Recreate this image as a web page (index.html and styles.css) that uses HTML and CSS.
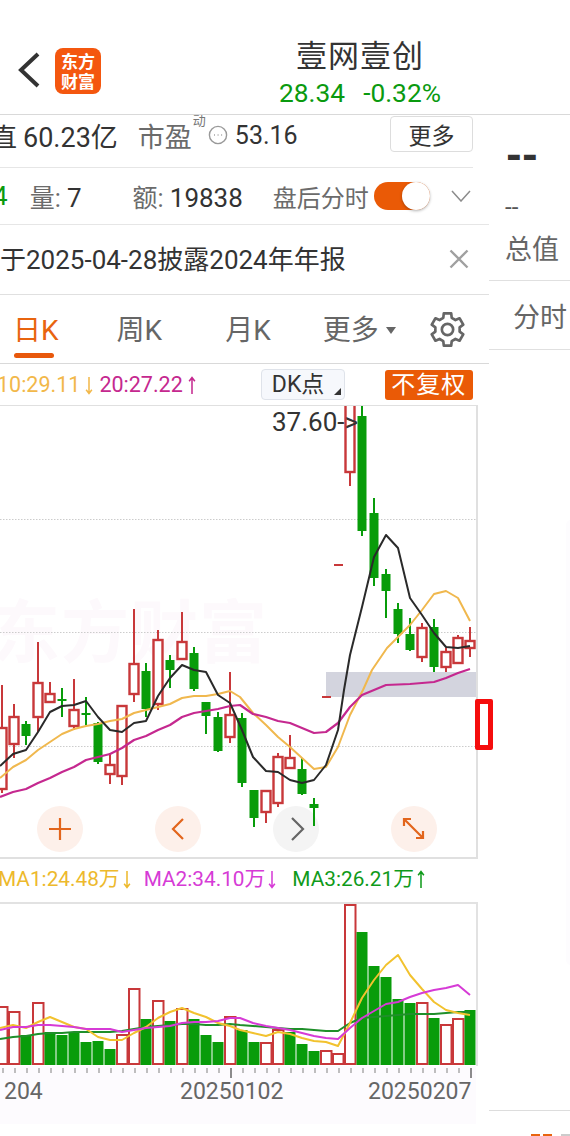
FILE: index.html
```html
<!DOCTYPE html>
<html lang="zh-CN">
<head>
  <meta charset="UTF-8" />
  <meta name="viewport" content="width=device-width, initial-scale=1.0"/>
  <title>壹网壹创</title>
  <link rel="stylesheet" href="styles.css">
</head>
<body>
  <div class="header">
    <svg class="back" viewBox="0 0 24 38"><path d="M21 3 L4 19 L21 35"/></svg>
    <div class="logo"><span>东方</span><span>财富</span></div>
    <div class="title-block">
      <div class="title">壹网壹创</div>
      <div class="price"><span>28.34</span><span>-0.32%</span></div>
    </div>
  </div>

  <div class="page">
    <div class="left">
      <!-- quote rows -->
      <div class="row row-stats">
        <span class="dark cut-left">直</span>
        <span class="dark stat-value">60.23亿</span>
        <span class="grey stat-pe">市盈<sup class="sup">动</sup></span>
        <svg class="dots" viewBox="0 0 20 20"><circle cx="10" cy="10" r="8.6"/><path d="M6 10h.9M9.6 10h.9M13.2 10h.9"/></svg>
        <span class="dark stat-num">53.16</span>
        <button class="more-btn">更多</button>
      </div>
      <div class="row row-volume">
        <span class="green vol-cut">4</span>
        <span class="vol-item vol-liang"><span class="grey">量:</span> <span class="dark vol-num">7</span></span>
        <span class="vol-item vol-e"><span class="grey">额:</span> <span class="dark vol-num">19838</span></span>
        <span class="grey vol-after">盘后分时</span>
        <span class="toggle"><span class="knob"></span></span>
        <svg class="chev" viewBox="0 0 20 12"><path d="M1 1 L10 11 L19 1"/></svg>
      </div>
      <div class="row row-notice">
        <span class="notice-text">于2025-04-28披露2024年年报</span>
        <svg class="close" viewBox="0 0 20 20"><path d="M1.5 1.5 L18.5 18.5 M18.5 1.5 L1.5 18.5"/></svg>
      </div>

      <!-- period tabs -->
      <div class="tabs">
        <div class="tab tab-active">日K</div>
        <div class="tab tab-week">周K</div>
        <div class="tab tab-month">月K</div>
        <div class="tab tab-more">更多<i class="caret"></i></div>
        <svg class="gear" viewBox="0 0 34 34">
          <path d="M12.9 5.7L13.4 1.400H20.600L21.100 5.700L24.700 7.800L28.700 6.100L32.300 12.300L28.800 14.900V19.100L32.300 21.700L28.700 27.900L24.700 26.200L21.100 28.300L20.600 32.600H13.400L12.900 28.300L9.300 26.200L5.300 27.900L1.700 21.700L5.200 19.100V14.900L1.700 12.300L5.300 6.100L9.300 7.800Z"/>
          <circle cx="17" cy="17" r="5.500"/>
        </svg>
      </div>

      <!-- MA legend + chart options -->
      <div class="ma-bar">
        <span class="ma-2">10:29.11<svg class="arrow" viewBox="0 0 8 20"><path d="M4 1V18M1 14.500L4 18.500L7 14.500"/></svg></span>
        <span class="ma-3">20:27.22<svg class="arrow" viewBox="0 0 8 20"><path d="M4 19V2M1 5.500L4 1.500L7 5.500"/></svg></span>
        <span class="dk-btn">DK点<i class="dk-corner"></i></span>
        <span class="fq-btn">不复权</span>
      </div>

      <!-- K line chart -->
      <div class="kline">
        <div class="watermark">东方财富</div>
        <svg id="kline-svg" class="chart-svg" viewBox="0 406 476 451"></svg>
        <div class="high-label">37.60-&gt;</div>
      </div>

      <div class="vol-legend">
        <span class="v1">MA1:24.48万<svg class="arrow" viewBox="0 0 8 20"><path d="M4 1V18M1 14.500L4 18.500L7 14.500"/></svg></span>
        <span class="v2">MA2:34.10万<svg class="arrow" viewBox="0 0 8 20"><path d="M4 1V18M1 14.500L4 18.500L7 14.500"/></svg></span>
        <span class="v3">MA3:26.21万<svg class="arrow" viewBox="0 0 8 20"><path d="M4 19V2M1 5.500L4 1.500L7 5.500"/></svg></span>
      </div>

      <!-- volume chart -->
      <div class="volume">
        <svg id="volume-svg" class="chart-svg" viewBox="0 904 476 162"></svg>
      </div>
      <div class="axis">
        <svg id="axis-svg" class="axis-ticks" viewBox="0 1066 476 12"></svg>
        <div class="axis-dates">
          <span class="date-cut">204</span>
          <span class="date-mid">20250102</span>
          <span class="date-end">20250207</span>
        </div>
      </div>
    </div>

    <!-- neighbouring stock page, peeking in from the right -->
    <div class="right">
      <div class="right-top">
        <div class="big-dash">--</div>
        <div class="small-dash">--</div>
        <div class="right-label">总值</div>
      </div>
      <div class="right-tab">分时</div>
      <div class="right-foot"><i></i><i></i><b></b></div>
    </div>

    <div class="scroll-marker"></div>
    <div class="edge-glow"></div>
  </div>

  <script src="chart.js"></script>
</body>
</html>
```

FILE: styles.css
```css
* {
  box-sizing: border-box;
}

body {
  font-family: Roboto, "Noto Sans CJK SC", sans-serif;
  background: #fff;
  color: #333;
  margin: 0;
  width: 570px;
  height: 1136px;
  overflow: hidden;
}

.dark { color: #333; }
.grey { color: #6b6b6b; }
.green { color: #0a9a0f; }

/* Header */
.header {
  height: 115px;
  padding: 36px 0 0 17px;
  display: flex;
  align-items: flex-start;
  border-bottom: 1px solid #d9d9d9;
}
.back {
  width: 24px;
  height: 38px;
  margin-top: 15px;
  fill: none;
  stroke: #333;
  stroke-width: 4;
}
.logo {
  width: 46px;
  height: 46px;
  margin: 12px 0 0 14px;
  background: #f4570f;
  border-radius: 8px;
  color: #fff;
  font-family: "Noto Sans CJK SC", sans-serif;
  font-weight: 700;
  font-size: 17px;
  line-height: 20px;
  display: flex;
  flex-direction: column;
  align-items: center;
  justify-content: center;
}
.title-block {
  width: 200px;
  margin-left: 159px;
  text-align: center;
}
.title {
  font-size: 31px;
  line-height: 36px;
  color: #333;
  font-family: "Noto Sans CJK SC", sans-serif;
  letter-spacing: 1px;
}
.price {
  margin-top: 5px;
  font-size: 26.300px;
  line-height: 32px;
  color: #0a9a0f;
  display: flex;
  justify-content: center;
  gap: 18px;
}

/* Page split */
.page {
  position: relative;
  display: flex;
  height: 1021px;
}
.left {
  width: 489px;
  flex: none;
  overflow: hidden;
}
.right {
  flex: 1;
  overflow: hidden;
  display: flex;
  flex-direction: column;
}

/* Quote rows */
.row {
  display: flex;
  align-items: center;
  white-space: nowrap;
}
.row-stats {
  height: 53px;
  width: 473px;
  font-size: 25px;
  padding-bottom: 12px;
  border-bottom: 1px solid #e6e6e6;
}
.cut-left {
  margin-left: -9px;
  font-size: 26px;
}
.stat-value {
  margin-left: 6px;
  font-size: 27px;
}
.stat-pe {
  margin-left: 20px;
  font-size: 27px;
  position: relative;
}
.sup {
  position: absolute;
  top: -4px;
  left: 55px;
  font-size: 13px;
  line-height: 18px;
  color: #777;
}
.dots {
  width: 20px;
  height: 20px;
  margin-left: 16px;
  fill: none;
  stroke: #999;
  stroke-width: 1.400;
}
.stat-num {
  margin-left: 7px;
}
.more-btn {
  margin-left: auto;
  align-self: flex-start;
  margin-top: 1px;
  width: 83px;
  height: 36px;
  background: #fff;
  border: 1px solid #ddd;
  border-radius: 4px;
  font: 23px "Noto Sans CJK SC", sans-serif;
  color: #333;
  padding: 0;
}

.row-volume {
  height: 57px;
  font-size: 25px;
  border-bottom: 1px solid #e6e6e6;
}
.vol-cut {
  margin-left: -7px;
  flex: none;
  font-size: 26px;
}
.vol-num {
  font-size: 26px;
}
.vol-liang {
  margin-left: 22px;
}
.vol-e {
  margin-left: 51px;
}
.vol-after {
  margin-left: 30px;
  font-size: 24px;
}
.toggle {
  width: 56px;
  height: 28px;
  margin-left: 5px;
  background: #ea5a06;
  border-radius: 14px;
  position: relative;
}
.knob {
  position: absolute;
  right: 0;
  top: 0;
  width: 28px;
  height: 28px;
  border-radius: 50%;
  background: #fff;
  box-shadow: 0 1px 3px rgba(0, 0, 0, .3);
}
.chev {
  width: 20px;
  height: 12px;
  margin-left: 21px;
  fill: none;
  stroke: #8c8c8c;
  stroke-width: 1.500;
}

.row-notice {
  height: 70px;
  padding-bottom: 5px;
  border-bottom: 1px solid #e0e0e0;
}
.notice-text {
  color: #333;
  font-size: 26px;
}
.close {
  width: 20px;
  height: 20px;
  margin: 4px 20px 0 auto;
  fill: none;
  stroke: #a0a0a0;
  stroke-width: 2.400;
}

/* Tabs */
.tabs {
  height: 69px;
  display: flex;
  align-items: center;
  border-bottom: 1px solid #d9d9d9;
  position: relative;
  font-size: 28px;
  color: #666;
}
.tab {
  white-space: nowrap;
  line-height: 36px;
  margin-top: 3px;
}
.tab-active {
  margin-left: 13px;
  color: #e8640f;
  position: relative;
}
.tab-active::after {
  content: "";
  position: absolute;
  left: 1px;
  right: 5px;
  bottom: -9px;
  height: 5px;
  border-radius: 3px;
  background: #e8580c;
}
.tab-week {
  margin-left: 58px;
}
.tab-month {
  margin-left: 63px;
}
.tab-more {
  margin-left: 52px;
}
.caret {
  display: inline-block;
  margin-left: 7px;
  vertical-align: 6px;
  border-left: 5px solid transparent;
  border-right: 5px solid transparent;
  border-top: 7px solid #666;
}
.gear {
  width: 35px;
  height: 35px;
  margin-left: 34px;
  fill: none;
  stroke: #666;
  stroke-width: 2.600;
  stroke-linejoin: round;
}

/* MA legend */
.ma-bar {
  height: 41px;
  display: flex;
  align-items: center;
  font-size: 21.500px;
  white-space: nowrap;
}
.ma-2 {
  color: #f2b84a;
  margin-left: -3px;
}
.ma-3 {
  color: #c5288f;
  margin-left: 6px;
}
.arrow {
  width: 8px;
  height: 19px;
  margin-left: 5px;
  vertical-align: -3px;
  fill: none;
  stroke: currentColor;
  stroke-width: 1.600;
}
.dk-btn {
  margin-left: 65px;
  width: 84px;
  height: 31px;
  background: #f6f8fc;
  border: 1px solid #dfe3ea;
  border-radius: 4px;
  color: #333;
  font-size: 23px;
  line-height: 29px;
  padding-left: 10px;
  position: relative;
}
.dk-corner {
  position: absolute;
  right: 3px;
  bottom: 4px;
  border-left: 7px solid transparent;
  border-bottom: 7px solid #333;
}
.fq-btn {
  margin-left: 40px;
  width: 88px;
  height: 30px;
  background: #ea5a06;
  border-radius: 3px;
  color: #fff;
  font-size: 24px;
  line-height: 30px;
  text-align: center;
  letter-spacing: 1px;
}

/* Charts */
.kline {
  width: 478px;
  height: 454px;
  position: relative;
  border-top: 1px solid #e0e0e0;
  border-right: 2px solid #e0e0e0;
  border-bottom: 2px solid #e0e0e0;
  overflow: hidden;
}
.chart-svg {
  display: block;
  width: 476px;
  height: 100%;
  position: relative;
}
.watermark {
  position: absolute;
  left: -8px;
  top: 188px;
  font-size: 68px;
  line-height: 80px;
  font-weight: 700;
  letter-spacing: 1px;
  color: #fdf9fc;
  white-space: nowrap;
}
.high-label {
  position: absolute;
  left: 272px;
  top: 1px;
  font-size: 26px;
  line-height: 30px;
  color: #333;
}

.vol-legend {
  height: 43px;
  padding-bottom: 8px;
  display: flex;
  align-items: center;
  font-size: 20.800px;
  white-space: nowrap;
}
.v1 {
  color: #edb92c;
  margin-left: -2px;
}
.v2 {
  color: #d63bd6;
  margin-left: 13px;
}
.v3 {
  color: #0f9a1a;
  margin-left: 16px;
}
.vol-legend .arrow {
  margin-left: 3px;
}

.volume {
  width: 478px;
  height: 164px;
  border-top: 2px solid #e2e2e2;
  border-right: 2px solid #e2e2e2;
  overflow: hidden;
}
.axis {
  width: 476px;
  height: 58px;
  background: #fdfbfe;
}
.axis-ticks {
  display: block;
  width: 476px;
  height: 12px;
}
.axis-dates {
  position: relative;
  height: 46px;
  font-size: 23px;
  color: #666;
  line-height: 28px;
}
.date-cut, .date-mid, .date-end {
  position: absolute;
  top: 0;
}
.date-cut { left: 4px; }
.date-mid { left: 180px; }
.date-end { left: 368px; }

/* Right panel */
.right-top {
  height: 166px;
  padding: 20px 0 0 16px;
  border-bottom: 1px solid #e0e0e0;
}
.big-dash {
  font-size: 40px;
  line-height: 44px;
  font-weight: 900;
  letter-spacing: -2px;
  color: #333;
}
.small-dash {
  font-size: 24px;
  line-height: 28px;
  margin-top: 14px;
  color: #555;
}
.right-label {
  font-size: 27px;
  line-height: 36px;
  margin-top: 11px;
  color: #666;
}
.right-tab {
  height: 69px;
  padding: 19px 0 0 24px;
  font-size: 27px;
  line-height: 36px;
  color: #666;
  white-space: nowrap;
  border-bottom: 1px solid #e0e0e0;
}
.right-foot {
  margin-top: auto;
  height: 26px;
  border-top: 1px solid #ddd;
  padding: 23px 0 0 42px;
  display: flex;
  gap: 3px;
}
.right-foot i {
  width: 10px;
  height: 3px;
  background: #e8640f;
}
.right-foot b {
  width: 10px;
  height: 3px;
  margin-left: 6px;
  background: #ccc;
}

.scroll-marker {
  position: absolute;
  left: 475px;
  top: 584px;
  width: 18px;
  height: 51px;
  border: 5px solid #f50d0d;
  border-radius: 2px;
  background: #fff;
}
.edge-glow {
  position: absolute;
  left: 566px;
  top: 405px;
  width: 10px;
  height: 445px;
  border-radius: 6px;
  background: #fdfcfe;
}
```

FILE: chart.js
```js
// x, high, body top, body bottom, low, colour (page pixels)
const CANDLES = [
  [2, 685, 728, 789, 793, "r"], [14, 704, 717, 744, 758, "r"], [26, 721, 724, 736, 745, "g"],
  [38, 642, 683, 717, 732, "r"], [50, 682, 694, 702, 702, "r"], [62, 688, 699, 701, 717, "g"],
  [74, 679, 710, 726, 730, "r"], [86, 697, 713, 715, 725, "g"], [98, 722, 723, 762, 764, "g"],
  [110, 753, 765, 774, 784, "r"], [122, 706, 706, 776, 785, "r"], [134, 609, 664, 694, 702, "r"],
  [146, 663, 671, 709, 717, "g"], [158, 630, 640, 704, 710, "r"], [170, 655, 660, 670, 688, "g"],
  [182, 612, 642, 659, 659, "r"], [194, 647, 653, 689, 691, "g"], [206, 702, 702, 716, 734, "g"],
  [218, 712, 717, 751, 752, "g"], [230, 672, 715, 737, 743, "r"], [242, 713, 718, 783, 787, "g"],
  [254, 790, 790, 818, 827, "g"], [266, 791, 791, 812, 823, "r"], [278, 753, 757, 803, 807, "r"],
  [290, 735, 758, 768, 768, "r"], [302, 758, 769, 794, 795, "g"], [314, 798, 804, 808, 826, "g"],
  [350, 400, 400, 472, 486, "r"], [362, 406, 416, 531, 536, "g"], [374, 498, 513, 578, 586, "g"],
  [386, 569, 574, 591, 618, "g"], [398, 603, 609, 634, 643, "g"], [410, 618, 634, 650, 651, "g"],
  [422, 623, 628, 657, 662, "r"], [434, 619, 627, 667, 672, "g"], [446, 648, 652, 667, 672, "r"],
  [458, 635, 638, 663, 664, "r"], [470, 627, 641, 648, 657, "r"]
];

const K_MA1 = "0,766 13,754 26,750 38,732 50,712 62,706 74,705 86,701 98,717 110,730 122,732 134,723 146,721 158,696 170,678 182,665 194,670 206,672 218,695 230,703 242,730 253,757 266,771 278,772 290,780 302,783 314,780 326,765 338,730 344,690 350,655 362,607 374,557 386,535 398,548 410,598 422,615 434,633 446,647 458,648 470,646";
const K_MA2 = "0,778 13,767 26,760 38,750 50,742 62,734 74,729 86,726 98,724 110,721 122,719 134,713 146,710 158,707 170,704 182,698 194,696 206,696 218,694 230,691 240,697 253,713 266,725 278,737 290,747 302,758 314,769 326,767 338,747 350,715 363,690 372,670 387,648 398,637 410,625 422,610 434,594 446,591 458,598 470,621";
const K_MA3 = "0,797 13,792 26,789 38,783 50,778 62,772 74,767 86,760 98,757 110,754 122,748 134,740 146,736 158,730 170,725 182,717 194,713 206,711 218,709 230,706 240,705 253,714 266,717 278,721 290,723 302,728 314,733 326,732 338,723 350,707 362,695 386,685 410,684 434,682 446,678 458,673 470,669";

// x, bar top, colour
const BARS = [
  [2, 1007, "r"], [14, 1012, "r"], [26, 1035, "g"], [38, 1003, "r"], [50, 1032, "g"], [62, 1035, "g"],
  [74, 1033, "g"], [86, 1042, "g"], [98, 1041, "g"], [110, 1049, "g"], [122, 1035, "r"], [134, 989, "r"],
  [146, 1019, "g"], [158, 1001, "r"], [170, 1021, "g"], [182, 1009, "r"], [194, 1019, "g"], [206, 1035, "g"],
  [218, 1042, "g"], [230, 1017, "r"], [242, 1030, "g"], [254, 1042, "g"], [266, 1043, "r"], [278, 1030, "r"],
  [290, 1032, "g"], [302, 1044, "g"], [314, 1051, "g"], [326, 1051, "r"], [338, 1054, "r"], [350, 905, "r"],
  [362, 932, "g"], [374, 966, "g"], [386, 977, "g"], [398, 999, "g"], [410, 1003, "g"], [422, 1003, "r"],
  [434, 1018, "g"], [446, 1025, "r"], [458, 1019, "r"], [470, 1010, "g"]
];

const V_MA1 = "0,1028 13,1025 26,1028 38,1022 50,1017 62,1022 74,1027 86,1029 98,1037 110,1040 122,1040 134,1033 146,1027 158,1018 170,1012 182,1008 194,1013 206,1017 218,1023 230,1026 240,1030 253,1033 266,1036 278,1032 290,1034 302,1038 314,1041 326,1042 338,1046 350,1023 362,998 374,980 386,965 398,955 410,975 422,989 434,1002 446,1010 458,1013 470,1015";
const V_MA2 = "0,1030 13,1027 26,1027 38,1025 50,1025 62,1026 74,1027 86,1029 98,1029 110,1029 122,1032 134,1030 146,1028 158,1027 170,1026 182,1023 194,1022 206,1022 218,1021 230,1018 240,1018 253,1023 266,1026 278,1028 290,1030 302,1033 314,1036 326,1038 338,1039 350,1028 362,1018 374,1011 386,1004 398,1002 410,997 422,993 434,990 446,988 458,985 470,995";
const V_MA3 = "0,1039 13,1037 26,1036 38,1034 50,1033 62,1033 74,1032 86,1032 98,1032 110,1032 122,1031 134,1029 146,1027 158,1026 170,1025 182,1024 194,1024 206,1025 218,1025 230,1024 240,1025 253,1026 266,1027 278,1028 290,1029 302,1029 314,1030 326,1031 338,1031 350,1023 362,1018 374,1017 386,1016 398,1015 410,1014 422,1014 434,1014 446,1013 458,1012 470,1012";

const RED = "#c8383a";
const GREEN = "#089c0a";

function polyline(points, colour, width) {
  return `<polyline points="${points}" fill="none" stroke="${colour}" stroke-width="${width}" stroke-linejoin="round"/>`;
}

function drawCandle([x, high, top, bottom, low, c]) {
  const colour = c === "r" ? RED : GREEN;
  let out = `<line x1="${x}" x2="${x}" y1="${high}" y2="${low}" stroke="${colour}" stroke-width="2"/>`;
  if (c === "r") {
    out += `<rect x="${x - 4.5}" y="${top}" width="9" height="${bottom - top}" fill="#fff" stroke="${colour}" stroke-width="2.400"/>`;
  } else {
    out += `<rect x="${x - 4.5}" y="${top}" width="9" height="${bottom - top}" fill="${colour}"/>`;
  }
  return out;
}

function drawKline() {
  let out = "";
  [519.5, 632.5, 746.5].forEach((y) => {
    out += `<line x1="0" x2="476" y1="${y}" y2="${y}" stroke="#ccc" stroke-width="1" stroke-dasharray="1.500 1.500"/>`;
  });
  out += `<rect x="326" y="672" width="150" height="25" fill="#d3d4de"/>`;

  // round buttons sit under the candles
  const orange = "#e2651c";
  const btn = (cx, fill) => `<circle cx="${cx}" cy="829" r="23" fill="${fill}"/>`;
  out += btn(60, "#fdf0ea") + btn(178, "#fdf0ea") + btn(296, "#f4f4f4") + btn(414, "#fdf0ea");
  const icon = (d, colour) => `<path d="${d}" fill="none" stroke="${colour}" stroke-width="2.200"/>`;
  out += icon("M49 829H71M60 818V840", orange);
  out += icon("M183 819L173 829L183 839", orange);
  out += icon("M292 818L303 829L292 840", "#666");
  out += icon("M404 819L423 838M404 826V819H411M423 831V838H416", orange);

  out += CANDLES.map(drawCandle).join("");
  // the two flat days
  out += `<rect x="322" y="696" width="9" height="2" fill="${RED}"/>`;
  out += `<rect x="334" y="564" width="9" height="2" fill="${RED}"/>`;
  out += polyline(K_MA2, "#f0b84e", 2);
  out += polyline(K_MA3, "#c5288f", 2.200);
  out += polyline(K_MA1, "#2a2a2a", 2);
  document.getElementById("kline-svg").innerHTML = out;
}

function drawVolume() {
  let out = "";
  BARS.forEach(([x, top, c]) => {
    if (c === "r") {
      out += `<rect x="${x - 5}" y="${top}" width="10.500" height="${1064 - top}" fill="#fff" stroke="${RED}" stroke-width="2"/>`;
    } else {
      out += `<rect x="${x - 5.500}" y="${top}" width="11" height="${1065 - top}" fill="${GREEN}"/>`;
    }
  });
  out += polyline(V_MA3, "#1f8f2a", 2);
  out += polyline(V_MA1, "#f2c22e", 2);
  out += polyline(V_MA2, "#d63bd6", 2);
  document.getElementById("volume-svg").innerHTML = out;

  let ticks = "";
  for (let x = 2; x <= 470; x += 12) {
    const major = x === 230 || x === 470;
    ticks += `<line x1="${x + 1}" x2="${x + 1}" y1="1068" y2="${major ? 1078 : 1073}" stroke="${major ? "#666" : "#aaa"}" stroke-width="1.500"/>`;
  }
  document.getElementById("axis-svg").innerHTML = ticks;
}

drawKline();
drawVolume();
```
